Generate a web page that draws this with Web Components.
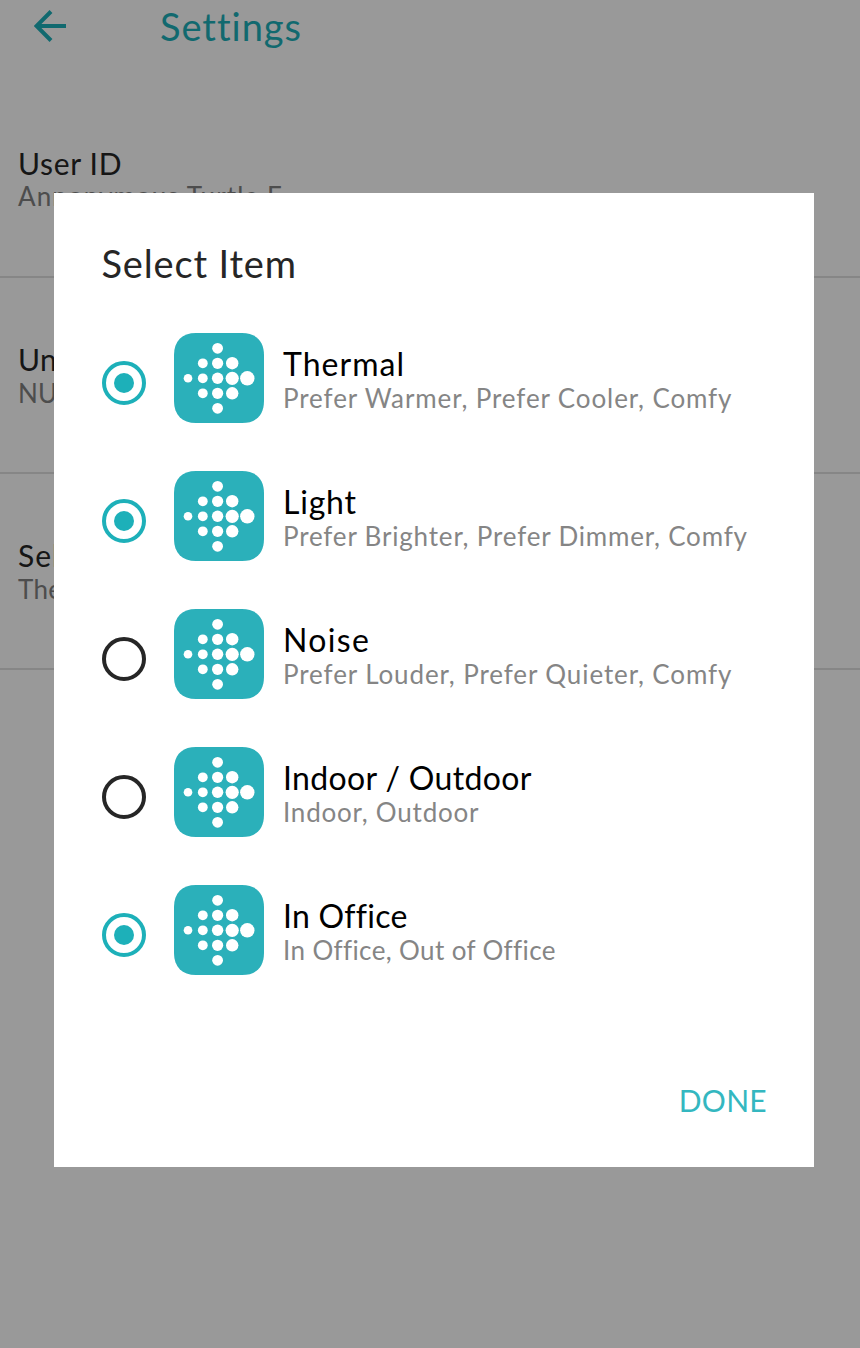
<!DOCTYPE html>
<html lang="en">
<head>
<meta charset="utf-8">
<title>Settings</title>
<style>
  html, body { margin: 0; height: 100%; }
  body { background: #fff; overflow: hidden; font-family: Lato, "Open Sans", sans-serif; }
</style>
</head>
<body>
<settings-screen></settings-screen>
<script>
/* Single line of text whose tracking is adjusted so it spans a given width. */
class TrackedText extends HTMLElement {
  connectedCallback() {
    const root = this.attachShadow({ mode: 'open' });
    root.innerHTML = `<style>
      :host { display: block; white-space: nowrap; }
      span { display: inline-block; white-space: nowrap; font-kerning: normal; font-variant-ligatures: none; }
    </style><span></span>`;
    const span = root.querySelector('span');
    const text = this.getAttribute('text');
    span.textContent = text;
    const target = Number(this.getAttribute('span'));
    if (target) {
      const natural = span.getBoundingClientRect().width;
      span.style.letterSpacing = ((target - natural) / (text.length - 1)) + 'px';
    }
  }
}

class AppBar extends HTMLElement {
  constructor() {
    super();
    this.attachShadow({ mode: 'open' }).innerHTML = `<style>
      :host { display: flex; height: 82px; box-sizing: border-box; color: #1db0b9; }
      svg { display: block; margin: 10px 94px 0 34px; flex: none; }
      .title { font-size: 38px; line-height: 46px; padding-top: 3px; }
    </style>
    <svg width="32" height="32" viewBox="0 0 32 32" fill="none" stroke="currentColor" stroke-width="4"><path d="M32 16H3M17 1.5L2.5 16L17 30.5"/></svg>
    <div class="title"><slot></slot></div>`;
  }
}

class SettingRow extends HTMLElement {
  connectedCallback() {
    this.attachShadow({ mode: 'open' }).innerHTML = `<style>
      :host { display: block; box-sizing: border-box; height: 196px; padding: 63px 18px 0; border-bottom: 2px solid #e0e0e0; }
      .name { font-size: 30px; line-height: 36px; color: #262626; }
      .value { font-size: 26px; line-height: 32px; color: #808080; margin-top: var(--value-gap, 0); }
    </style>
    <tracked-text class="name" text="${this.getAttribute('name')}" span="${this.getAttribute('name-span')}"></tracked-text>
    <tracked-text class="value" text="${this.getAttribute('value')}" span="${this.getAttribute('value-span')}"></tracked-text>`;
  }
}

class RadioMark extends HTMLElement {
  connectedCallback() {
    const on = this.hasAttribute('checked');
    this.attachShadow({ mode: 'open' }).innerHTML = `<style>
      :host { display: block; width: 44px; height: 44px; flex: none; color: ${on ? '#1db0b9' : '#262626'}; }
      svg { display: block; }
    </style>
    <svg width="44" height="44" viewBox="0 0 44 44"><circle cx="22" cy="22" r="20" fill="none" stroke="currentColor" stroke-width="4"/>${on ? '<circle cx="22" cy="22" r="10" fill="currentColor"/>' : ''}</svg>`;
  }
}

class AppTile extends HTMLElement {
  constructor() {
    super();
    this.attachShadow({ mode: 'open' }).innerHTML = `<style>
      :host { display: block; width: 90px; height: 90px; flex: none; }
      svg { display: block; }
    </style>
    <svg width="90" height="90" viewBox="0 0 90 90">
      <path fill="#2bb0ba" d="M22 0H68C82 0 90 8 90 22V68C90 82 82 90 68 90H22C8 90 0 82 0 68V22C0 8 8 0 22 0Z"/>
      <g fill="#fff">
        <circle cx="14" cy="45.3" r="4.3"/>
        <circle cx="28.8" cy="30.3" r="4.9"/><circle cx="28.8" cy="45.3" r="4.9"/><circle cx="28.8" cy="60.3" r="4.9"/>
        <circle cx="43.6" cy="15.3" r="5.4"/><circle cx="43.6" cy="30.3" r="5.6"/><circle cx="43.6" cy="45.3" r="5.7"/><circle cx="43.6" cy="60.3" r="5.6"/><circle cx="43.6" cy="75.3" r="5.4"/>
        <circle cx="58.2" cy="30.2" r="6.2"/><circle cx="58.2" cy="45.3" r="6.6"/><circle cx="58.2" cy="60.3" r="6.2"/>
        <circle cx="73.3" cy="45.3" r="7.2"/>
      </g>
    </svg>`;
  }
}

class ChoiceRow extends HTMLElement {
  connectedCallback() {
    this.attachShadow({ mode: 'open' }).innerHTML = `<style>
      :host { display: flex; height: 90px; }
      radio-mark { margin: 28px 28px 0 0; }
      .texts { margin-left: 19px; padding-top: 12px; }
      .name { font-size: 32px; line-height: 38px; color: #000; }
      .detail { font-size: 26px; line-height: 32px; color: #858585; margin-top: -1px; }
    </style>
    <radio-mark ${this.hasAttribute('checked') ? 'checked' : ''}></radio-mark>
    <app-tile></app-tile>
    <div class="texts">
      <tracked-text class="name" text="${this.getAttribute('name')}" span="${this.getAttribute('name-span')}"></tracked-text>
      <tracked-text class="detail" text="${this.getAttribute('detail')}" span="${this.getAttribute('detail-span')}"></tracked-text>
    </div>`;
  }
}

class SelectDialog extends HTMLElement {
  constructor() {
    super();
    this.attachShadow({ mode: 'open' }).innerHTML = `<style>
      :host { display: flex; flex-direction: column; box-sizing: border-box; width: 760px; height: 974px; background: #fff; padding: 47px 47px 43px 48px; }
      .title { font-size: 38px; line-height: 46px; color: #262626; height: 93px; flex: none; margin-left: -0.5px; }
      .choices { display: flex; flex-direction: column; gap: 48px; flex: 1; }
      .actions { display: flex; justify-content: flex-end; color: #34b7c0; font-size: 30px; line-height: 48px; }
    </style>
    <div class="title"><slot name="title"></slot></div>
    <div class="choices"><slot></slot></div>
    <div class="actions"><slot name="action"></slot></div>`;
  }
}

class SettingsScreen extends HTMLElement {
  connectedCallback() {
    this.attachShadow({ mode: 'open' }).innerHTML = `<style>
      :host { display: block; position: relative; width: 860px; height: 1348px; overflow: hidden; background: #fff; }
      .user { --value-gap: -1px; }
      .scrim { position: absolute; inset: 0; box-sizing: border-box; padding: 193px 46px 0 54px; background: rgba(0,0,0,.4); }
    </style>
    <app-bar><tracked-text text="Settings" span="141"></tracked-text></app-bar>
    <setting-row class="user" name="User ID" name-span="103.5" value="Annonymous Turtle E" value-span="264"></setting-row>
    <setting-row name="Units" name-span="71" value="NULL" value-span="66"></setting-row>
    <setting-row name="Select" name-span="85" value="Thermal" value-span="95"></setting-row>
    <div class="scrim">
      <select-dialog>
        <tracked-text slot="title" text="Select Item" span="194.5"></tracked-text>
        <choice-row checked name="Thermal" name-span="121" detail="Prefer Warmer, Prefer Cooler, Comfy" detail-span="448.5"></choice-row>
        <choice-row checked name="Light" name-span="73" detail="Prefer Brighter, Prefer Dimmer, Comfy" detail-span="464"></choice-row>
        <choice-row name="Noise" name-span="86" detail="Prefer Louder, Prefer Quieter, Comfy" detail-span="448.5"></choice-row>
        <choice-row name="Indoor / Outdoor" name-span="248.5" detail="Indoor, Outdoor" detail-span="195.5"></choice-row>
        <choice-row checked name="In Office" name-span="124.5" detail="In Office, Out of Office" detail-span="272.5"></choice-row>
        <tracked-text slot="action" text="DONE" span="88"></tracked-text>
      </select-dialog>
    </div>`;
  }
}

customElements.define('tracked-text', TrackedText);
customElements.define('app-bar', AppBar);
customElements.define('setting-row', SettingRow);
customElements.define('radio-mark', RadioMark);
customElements.define('app-tile', AppTile);
customElements.define('choice-row', ChoiceRow);
customElements.define('select-dialog', SelectDialog);
customElements.define('settings-screen', SettingsScreen);
</script>
</body>
</html>
